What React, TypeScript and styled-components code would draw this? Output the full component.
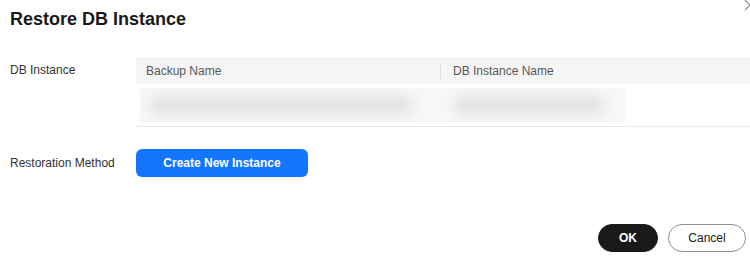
import React from "react";
import styled, { createGlobalStyle } from "styled-components";

const Global = createGlobalStyle`
  html, body { margin: 0; padding: 0; background: #ffffff; }
  body { font-family: "Liberation Sans", Arial, sans-serif; color: #191919; }
  * { box-sizing: border-box; }
`;

const Dialog = styled.div`
  position: relative;
  width: 750px;
  height: 272px;
  overflow: hidden;
  padding: 7px 4px 20px 10px;
  display: flex;
  flex-direction: column;
`;

const Title = styled.h2`
  margin: 0;
  font-size: 18px;
  line-height: 24px;
  font-weight: 700;
  color: #191919;
`;

const Close = styled.button`
  position: absolute;
  top: -2px;
  right: -7px;
  width: 14px;
  height: 14px;
  padding: 0;
  border: none;
  background: transparent;
  color: #8a8a8a;
  display: flex;
`;

const Form = styled.div`
  margin-top: 26px;
  margin-right: -4px;
  display: grid;
  grid-template-columns: 126px 1fr;
  row-gap: 22px;
`;

const Label = styled.div<{ $h: number }>`
  font-size: 12px;
  line-height: ${(p) => p.$h}px;
  height: ${(p) => p.$h}px;
  color: #333333;
`;

const Table = styled.div`
  display: flex;
  flex-direction: column;
`;

const HeadRow = styled.div`
  height: 27px;
  background: #f5f5f5;
  display: grid;
  grid-template-columns: 304px 1fr;
  align-items: center;
`;

const HeadCell = styled.div<{ $divider?: boolean }>`
  position: relative;
  font-size: 12px;
  color: #575757;
  padding-left: ${(p) => (p.$divider ? 12 : 10)}px;
  line-height: 16px;
  border-left: ${(p) => (p.$divider ? "1px solid #dcdcdc" : "none")};
`;

const BodyRow = styled.div`
  height: 43px;
  border-bottom: 1px solid #ebebeb;
  display: flex;
  align-items: center;
  padding-left: 4px;
`;

const CellFrame = styled.div`
  height: 34px;
  width: 486px;
  background: #f7f7f7;
  display: flex;
  align-items: center;
  overflow: hidden;
`;

const Blur = styled.div<{ $w: number; $ml: number }>`
  width: ${(p) => p.$w}px;
  margin-left: ${(p) => p.$ml}px;
  height: 20px;
  border-radius: 6px;
  background: #e4e4e4;
  filter: blur(6px);
  flex: none;
`;

const PrimaryButton = styled.button`
  width: 172px;
  height: 28px;
  border: none;
  border-radius: 6px;
  background: #1476ff;
  color: #ffffff;
  font-family: inherit;
  font-size: 12px;
  font-weight: 700;
  padding: 0;
`;

const Footer = styled.div`
  margin-top: auto;
  display: flex;
  justify-content: flex-end;
  gap: 10px;
`;

const PillButton = styled.button<{ $dark?: boolean; $w: number }>`
  width: ${(p) => p.$w}px;
  height: 28px;
  border-radius: 14px;
  font-family: inherit;
  font-size: 12px;
  padding: 0;
  font-weight: ${(p) => (p.$dark ? 700 : 400)};
  background: ${(p) => (p.$dark ? "#191919" : "#ffffff")};
  color: ${(p) => (p.$dark ? "#ffffff" : "#191919")};
  border: 1px solid ${(p) => (p.$dark ? "#191919" : "#8f8f8f")};
`;

export default function App() {
  return (
    <>
      <Global />
      <Dialog>
        <Title>Restore DB Instance</Title>
        <Close aria-label="close">
          <svg width="14" height="14" viewBox="0 0 14 14">
            <path d="M2 2 L12 12 M12 2 L2 12" stroke="currentColor" strokeWidth="1.2" fill="none" />
          </svg>
        </Close>
        <Form>
          <Label $h={27}>DB Instance</Label>
          <Table>
            <HeadRow>
              <HeadCell>Backup Name</HeadCell>
              <HeadCell $divider>DB Instance Name</HeadCell>
            </HeadRow>
            <BodyRow>
              <CellFrame>
                <Blur $w={262} $ml={10} />
                <Blur $w={150} $ml={42} />
              </CellFrame>
            </BodyRow>
          </Table>
          <Label $h={28}>Restoration Method</Label>
          <div>
            <PrimaryButton>Create New Instance</PrimaryButton>
          </div>
        </Form>
        <Footer>
          <PillButton $dark $w={60}>OK</PillButton>
          <PillButton $w={78}>Cancel</PillButton>
        </Footer>
      </Dialog>
    </>
  );
}
